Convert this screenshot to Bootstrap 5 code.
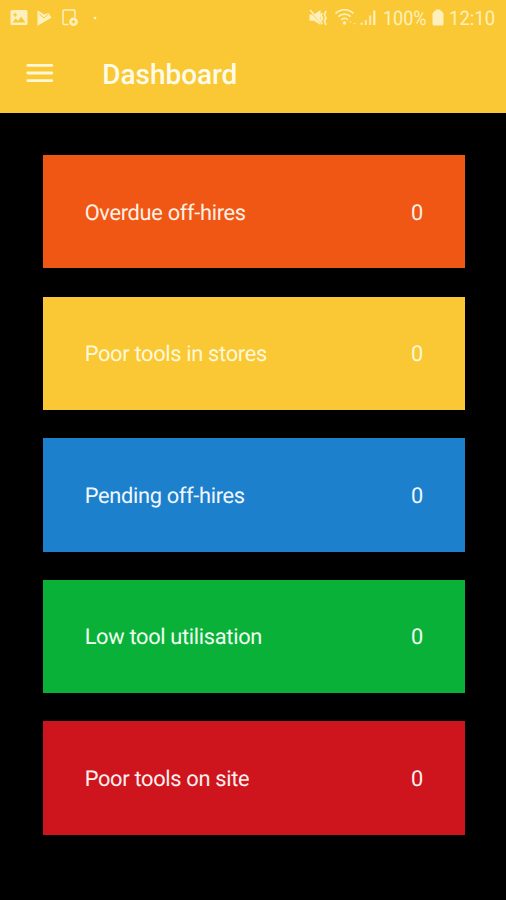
<!DOCTYPE html>
<html lang="en">
<head>
<meta charset="utf-8">
<meta name="viewport" content="width=device-width, initial-scale=1">
<title>Dashboard</title>
<link href="https://cdn.jsdelivr.net/npm/bootstrap@5.3.0/dist/css/bootstrap.min.css" rel="stylesheet">
<style>
  body { font-family: Roboto, "Liberation Sans", sans-serif; background: #000; height: 900px; overflow: hidden; text-rendering: geometricPrecision; }
  .app-header { background: #f9c834; height: 113px; }
  .status-bar { height: 36px; padding: 0 11px 0 10px; color: #fef0bd; font-size: 20px; line-height: 36px; }
  .status-bar svg { display: block; flex: none; }
  .status-text { display: inline-block; white-space: nowrap; transform-origin: 0 50%; }
  .charge { width: 45px; margin-left: 5px; }
  .charge .status-text { transform: scaleX(.9); }
  .clock { width: 46px; margin-left: 5px; }
  .clock .status-text { transform: scaleX(.925); }
  .title-bar { height: 77px; padding-left: 26px; }
  .menu-button { width: 28px; height: 20px; margin-bottom: 3px; }
  .screen-title { font-size: 28px; font-weight: 500; line-height: 32px; margin-left: 48.300px; color: #fffbe9; letter-spacing: -.05px; }
  .tiles { padding: 42px 41.5px 0 42.7px; gap: 28.2px; }
  .tile { height: 113.4px; padding: 4px 41.500px 0 42px; color: #fff; font-size: 21.800px; line-height: 28px; letter-spacing: -.31px; }
  .tile-orange { background: #f15714; color: #fff0e4; }
  .tile-yellow { background: #f9c834; color: #fff8d8; }
  .tile-blue { background: #1d80cc; color: #f0f8ff; }
  .tile-green { background: #09b139; color: #effff0; }
  .tile-red { background: #ce151e; color: #ffeeee; }
</style>
</head>
<body>
<header class="app-header">
  <div class="status-bar d-flex align-items-center">
    <svg width="18" height="18" viewBox="0 0 18 18" aria-hidden="true"><path fill="#fef0bd" fill-rule="evenodd" d="M2 1h14a1.5 1.5 0 0 1 1.5 1.500v12A1.500 1.500 0 0 1 16 16H2a1.500 1.500 0 0 1-1.500-1.500v-12A1.500 1.500 0 0 1 2 1zM2.500 13.500h13l-4.300-5.700-3.200 4.100-2.200-2.600zM4.500 4v1.200H3.300v1.300h1.200v1.200h1.300V6.500H7V5.200H5.800V4z"/></svg>
    <svg class="ms-2" width="17" height="18" viewBox="0 0 17 18" aria-hidden="true"><path fill="#fef0bd" d="M1.500 1.200 8 5.500 12.500 4l3 4.700L1.500 16.700z"/><path d="m3.500 5 4.500 4 4.500-4" fill="none" stroke="#f9c834" stroke-width="1"/></svg>
    <svg width="19" height="20" viewBox="0 0 19 20" style="margin-left:7px" aria-hidden="true"><path fill="none" stroke="#fef0bd" stroke-width="1.500" d="M8.500 16.500H4.300A1.300 1.300 0 0 1 3 15.200V3.300A1.300 1.300 0 0 1 4.300 2h9.400A1.300 1.300 0 0 1 15 3.300v6"/><circle cx="13.500" cy="13.800" r="4.300" fill="#fef0bd"/><path d="M13.500 12v3.600M11.700 13.800h3.600" stroke="#f9c834" stroke-width="1.500"/></svg>
    <svg width="4" height="4" viewBox="0 0 4 4" style="margin-left:14px" aria-hidden="true"><circle cx="2" cy="2" r="1.300" fill="#fef0bd"/></svg>
    <svg class="ms-auto" width="20" height="18" viewBox="0 0 20 18" aria-hidden="true"><path fill="#fef0bd" d="M.5 5.500H5L11.500 1v15L5 11.800H.5z"/><path d="m0 1.500 13 14" stroke="#f9c834" stroke-width="1"/><path d="m1 1 12.500 14" stroke="#fef0bd" stroke-width="1.500"/><path d="m13 4-1 2.500 1.500 2.500-1.500 3M17 2l-1.500 3.500L17 9l-1.500 3 1.500 4" fill="none" stroke="#fef0bd" stroke-width="1.800"/></svg>
    <svg width="25" height="20" viewBox="0 0 25 20" style="margin-left:5px" aria-hidden="true"><g fill="none" stroke="#fef0bd" stroke-width="1.700"><path d="M1.500 5.500c5-5 13-5 18 0M4.400 8.700c3.500-3.500 8.800-3.500 12.300 0M7.300 11.800c1.900-1.900 4.600-1.900 6.500 0"/></g><circle cx="10.500" cy="15" r="1.700" fill="#fef0bd"/><path d="m15 14.500 1.500-1.800 1.500 1.800zM19 15l1.500 1.800L22 15z" fill="#fef0bd" opacity=".65"/></svg>
    <svg width="18" height="18" viewBox="0 0 18 18" style="margin-left:1px" aria-hidden="true"><g fill="#fef0bd"><path d="M.5 13.500h2.200V16H.5zM4.700 11H7v5H4.700zM8.900 6.500h2.400V16H8.900z" opacity=".75"/><path d="M13.200 1.500h2.200V16h-2.200z"/></g></svg>
    <span class="charge"><span class="status-text">100%</span></span>
    <svg width="12" height="18" viewBox="0 0 12 18" style="margin-left:4px" aria-hidden="true"><path fill="#fef0bd" d="M3.500.5h5V2h1l2 2.500V15a1.500 1.500 0 0 1-1.500 1.500H2A1.500 1.500 0 0 1 .5 15V4.500l2-2.500h1z"/></svg>
    <span class="clock"><span class="status-text">12:10</span></span>
  </div>
  <nav class="title-bar d-flex align-items-center" aria-label="Main">
    <button class="menu-button btn p-0 border-0 d-flex" type="button" aria-label="Menu">
      <svg width="28" height="20" viewBox="0 0 28 20"><path d="M1.800 2.400h24M1.800 10h24M1.800 17.600h24" stroke="#fff7d5" stroke-width="2.900" stroke-linecap="round"/></svg>
    </button>
    <h1 class="screen-title mb-0">Dashboard</h1>
  </nav>
</header>
<main class="tiles d-flex flex-column">
  <div class="tile tile-orange d-flex align-items-center justify-content-between"><span>Overdue off-hires</span><span>0</span></div>
  <div class="tile tile-yellow d-flex align-items-center justify-content-between"><span>Poor tools in stores</span><span>0</span></div>
  <div class="tile tile-blue d-flex align-items-center justify-content-between"><span>Pending off-hires</span><span>0</span></div>
  <div class="tile tile-green d-flex align-items-center justify-content-between"><span>Low tool utilisation</span><span>0</span></div>
  <div class="tile tile-red d-flex align-items-center justify-content-between"><span>Poor tools on site</span><span>0</span></div>
</main>
<script src="https://cdn.jsdelivr.net/npm/bootstrap@5.3.0/dist/js/bootstrap.bundle.min.js"></script>
</body>
</html>
